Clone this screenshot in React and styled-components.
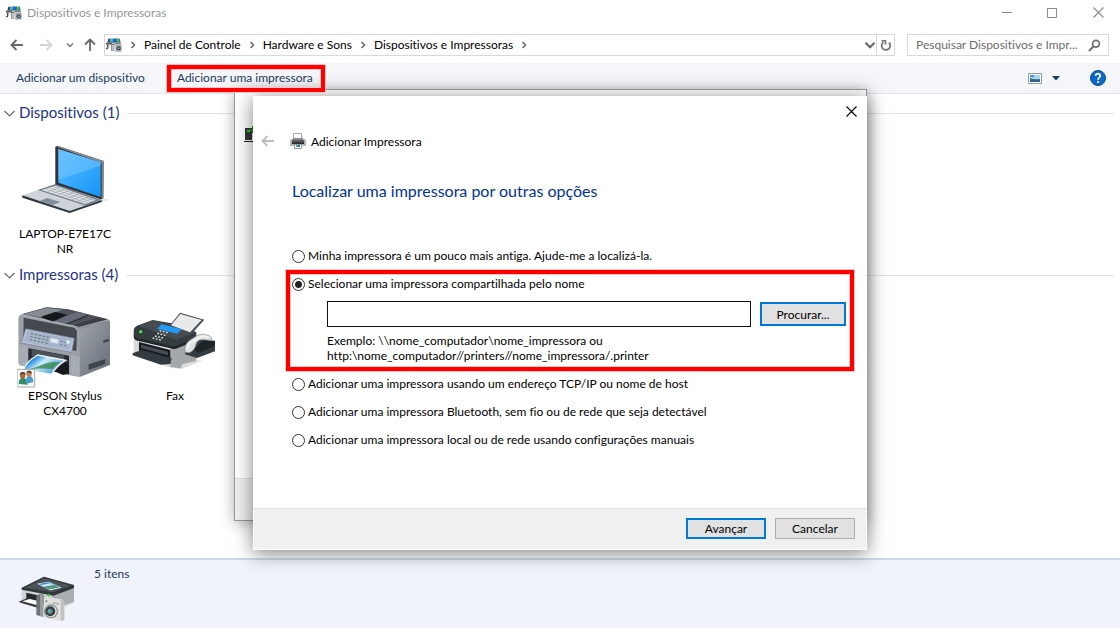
import React from "react";
import styled, { createGlobalStyle, css } from "styled-components";

const GlobalStyle = createGlobalStyle`
  *, *::before, *::after { box-sizing: border-box; }
  body { margin: 0; background: #fff; }
  body, button, input {
    font-family: Lato, "Open Sans", sans-serif;
    font-size: 12px;
    font-variant-ligatures: none;
    line-height: 15px;
    color: #000;
  }
  button { cursor: default; }
`;

const Explorer = styled.div`
  position: relative;
  display: flex;
  flex-direction: column;
  min-height: 100vh;
  overflow: hidden;
`;

const PlainButton = styled.button`
  display: flex;
  align-items: center;
  justify-content: center;
  flex: none;
  width: ${(p) => p.$w}px;
  height: ${(p) => p.$h || 20}px;
  padding: 0;
  border: 0;
  background: none;
`;

/* Title bar */
const TitleBar = styled.header`
  display: flex;
  align-items: center;
  height: 25px;
  padding-left: 6px;
`;

const WindowTitle = styled.h1`
  flex: 1;
  margin: 0 0 0 5px;
  font-size: 12px;
  font-weight: 400;
  color: #969696;
`;

/* Address row */
const NavRow = styled.nav`
  display: flex;
  align-items: center;
  height: 38px;
  padding: 2px 11px 0 6px;
`;

const AddressBar = styled.div`
  display: flex;
  align-items: center;
  flex: 1;
  height: 22px;
  margin-right: 12px;
  border: 1px solid #d9d9d9;
`;

const Crumbs = styled.ol`
  display: flex;
  align-items: center;
  flex: 1;
  margin: 0;
  padding: 0 0 0 1px;
  list-style: none;
  white-space: nowrap;
`;

const Crumb = styled.li`
  display: flex;
  align-items: center;
`;

const CrumbLink = styled.a`
  padding-bottom: 2px;
  color: #000;
  text-decoration: none;
`;

const RefreshCell = styled.div`
  border-left: 1px solid #d9d9d9;
`;

const SearchBox = styled.label`
  display: flex;
  align-items: center;
  width: 202px;
  height: 22px;
  padding: 0 7px 0 8px;
  border: 1px solid #d9d9d9;
`;

const SearchInput = styled.input`
  flex: 1;
  min-width: 0;
  padding: 0 0 2px;
  border: 0;
  outline: 0;
  background: none;
  &::placeholder { color: #6d6d6d; opacity: 1; }
`;

/* Command bar */
const CommandBar = styled.div`
  display: flex;
  align-items: center;
  height: 31px;
  padding-left: 16px;
  border-bottom: 1px solid #e3e5e9;
  background: #f4f6f9;
`;

const Command = styled.button`
  position: relative;
  height: 30px;
  margin-right: 32px;
  padding: 0 0 2px;
  border: 0;
  background: none;
  color: #1e395b;
  white-space: nowrap;
`;

const ViewControls = styled.div`
  display: flex;
  margin: 0 9px 0 auto;
`;

const Highlight = styled.span`
  position: absolute;
  z-index: 5;
  inset: ${(p) => p.$inset};
  border: 4px solid #fe0000;
  box-shadow: 0 0 0 1px #ffc4c4, inset 0 0 0 1px #ffc4c4;
  pointer-events: none;
`;

/* Device groups */
const Content = styled.main`
  flex: 1;
  padding: 9px 6px 0 0;
`;

const Group = styled.section`
  margin-bottom: 9px;
`;

const GroupHeader = styled.h2`
  display: flex;
  align-items: center;
  height: 20px;
  margin: 0 0 19px;
  padding-left: 4px;
  font-size: 15px;
  line-height: 18px;
  font-weight: 400;
  color: #1e3287;
  white-space: nowrap;
  &::after {
    content: "";
    flex: 1;
    height: 1px;
    margin-left: 8px;
    background: #e2e2e2;
  }
`;

const GroupName = styled.span`
  margin-left: 4px;
  padding-bottom: 2px;
`;

const Tiles = styled.div`
  display: flex;
  padding-left: 10px;
`;

const Tile = styled.figure`
  display: flex;
  flex-direction: column;
  align-items: center;
  width: 110px;
  margin: 0;
  text-align: center;
`;

const TileLabel = styled.figcaption`
  white-space: pre-line;
`;

/* Details pane */
const DetailsPane = styled.footer`
  display: flex;
  height: 70px;
  padding: 6px 17px;
  border-top: 2px solid #cfd9ea;
  background: #f0f3fa;
  color: #1e395b;
`;

const DetailsPicture = styled.div`
  padding-top: 8px;
`;

const DetailsText = styled.span`
  margin-left: 15px;
`;

/* Dialogs */
const windowBase = css`
  position: absolute;
  display: flex;
  flex-direction: column;
  background: #fff;
`;

const BackWindow = styled.div`
  ${windowBase}
  left: 234px;
  top: 89px;
  width: 633px;
  height: 432px;
  border: 1px solid #999;
  box-shadow: 0 2px 14px rgba(0, 0, 0, 0.3);
`;

const BackBody = styled.div`
  flex: 1;
  padding: 36px 9px;
`;

const BackFooter = styled.div`
  height: 42px;
  border-top: 1px solid #dfdfdf;
  background: #f0f0f0;
`;

const Dialog = styled.form`
  ${windowBase}
  left: 253px;
  top: 96px;
  width: 614px;
  z-index: 2;
  box-shadow: 0 3px 18px rgba(0, 0, 0, 0.5);
`;

const DialogTop = styled.div`
  display: flex;
  justify-content: flex-end;
  padding: 5px 5px 0 0;
`;

const DialogHeading = styled.div`
  display: flex;
  align-items: center;
  height: 20px;
  margin-top: 9px;
  padding-left: 5px;
`;

const PrinterSlot = styled.span`
  display: flex;
  margin: 0 5px 0 12px;
`;

const DialogBody = styled.div`
  padding: 29px 13px 54px 39px;
`;

const DialogTitle = styled.h2`
  margin: 0 0 40px;
  font-size: 16px;
  line-height: 22px;
  font-weight: 400;
  color: #003399;
`;

const Option = styled.label`
  display: flex;
  align-items: center;
  height: 28px;
  padding-bottom: 2px;
  white-space: nowrap;
`;

const Radio = styled.input`
  appearance: none;
  flex: none;
  width: 13px;
  height: 13px;
  margin: 2px 3px 0 0;
  border: 1px solid #333;
  border-radius: 50%;
  background: #fff;
  &:checked { background: radial-gradient(circle, #222 0 3px, #fff 4px); }
`;

const SharedOption = styled.div`
  position: relative;
  height: 100px;
`;

const SharedFields = styled.div`
  display: flex;
  align-items: center;
  gap: 9px;
  padding: 3px 8px 0 35px;
`;

const NameInput = styled.input`
  flex: 1;
  min-width: 0;
  height: 26px;
  padding: 0 4px;
  border: 1px solid #111;
  background: #fff;
`;

const Hint = styled.p`
  margin: 6px 0 0 35px;
`;

const PushButton = styled.button`
  width: ${(p) => p.$w}px;
  height: ${(p) => p.$h}px;
  padding: 0;
  border: ${(p) => (p.$primary ? "2px solid #0078d7" : "1px solid #adadad")};
  background: #e1e1e1;
`;

const DialogFooter = styled.div`
  display: flex;
  justify-content: flex-end;
  gap: 9px;
  height: 42px;
  padding: 9px 11px;
  border: 1px solid #fff;
  border-top-color: #dfdfdf;
  background: #f0f0f0;
`;

const line = { fill: "none", strokeLinecap: "butt" };

const Arrow = ({ color, dir = "left" }) => (
  <svg width="14" height="14" viewBox="0 0 14 14" aria-hidden="true">
    <g {...line} stroke={color} strokeWidth="1.8"
      transform={dir === "right" ? "rotate(180 7 7)" : dir === "up" ? "rotate(90 7 7)" : undefined}>
      <path d="M1.5 7H13M6.5 2L1.5 7l5 5" />
    </g>
  </svg>
);

const Chevron = ({ size = 8, color = "#666", dir = "down", weight = 1.5 }) => (
  <svg width={size} height={size} viewBox="0 0 8 8" aria-hidden="true">
    <path {...line} stroke={color} strokeWidth={weight} d={dir === "down" ? "M1 2.5l3 3 3-3" : "M2.5 1l3 3-3 3"} />
  </svg>
);

const GroupArrow = () => (
  <svg width="11" height="7" viewBox="0 0 11 7" aria-hidden="true">
    <path {...line} stroke="#666" strokeWidth="1.1" d="M.5 1l5 5 5-5" />
  </svg>
);

const Cross = ({ color }) => (
  <svg width="11" height="11" viewBox="0 0 11 11" aria-hidden="true">
    <path {...line} stroke={color} strokeWidth="1.1" d="M.5.5l10 10M10.5.5l-10 10" />
  </svg>
);

const DevicesIcon = () => (
  <svg width="16" height="16" viewBox="18 13 48 48" aria-hidden="true">
    <path d="M25 18h34l3 12H22z" fill="#3b4248" />
    <path d="M31 18h9v9H29z" fill="#35c3dd" />
    <path d="M39 18h11v9H38z" fill="#1266d8" />
    <path d="M50 18h7l2 9h-9z" fill="#45c766" />
    <path d="M20 30h44v6H20z" fill="#c9cccf" />
    <path d="M18 30h18v6H18z" fill="#555c60" />
    <path d="M21 36h15v12H21z" fill="#eceded" />
    <path d="M21 36h4v9h-4z" fill="#3f464b" />
    <path d="M18 45h6v5h-6z" fill="#555" />
    <path d="M34 34h9v21h-9z" fill="#686e72" />
    <path d="M37 37h4v17h-4z" fill="#e8e9ea" />
    <path d="M46 37h19v20H46z" fill="#a4a8ab" />
    <path d="M44 31h18v4H44z" fill="#7d858a" />
    <circle cx="56" cy="47" r="6" fill="#3c4247" />
    <circle cx="56" cy="47" r="2.5" fill="#9cc" />
  </svg>
);

const LaptopIcon = () => (
  <svg width="96" height="84" viewBox="50 36 288 252" aria-hidden="true">
    <defs>
      <linearGradient id="screen" x1="0" y1="0" x2="1" y2="1">
        <stop offset="0" stopColor="#5cbcff" />
        <stop offset="1" stopColor="#1496f8" />
      </linearGradient>
    </defs>
    <path d="M300 205l28 4-30 9z" fill="#e6e6e6" />
    <path d="M66 196v7l142 46 96-33v-6z" fill="#30383f" />
    <path d="M66 196l100-34 138 48-96 33z" fill="#cfd4db" />
    <path d="M112 180l54-18 138 48-48 17z" fill="#77838f" />
    <path d="M124 180l42-13 122 43-34 12z" fill="#e6e9ec" />
    <g stroke="#7b8690" strokeWidth="1.4">
      <path d="M134 176l131 44M145 173l131 43M156 169l130 44" />
      <path d="M140 186l38-13M154 191l38-13M168 196l38-13M182 201l38-13M196 206l38-13M210 211l38-13M224 216l38-13M238 219l38-13" />
    </g>
    <path d="M118 213l22-9 40 12-23 9z" fill="#7f8c9a" />
    <path d="M165 50l6-3 139 46-1 112-8 3-136-45z" fill="#2d3338" />
    <path d="M171 47l139 46-1 112-5 2V98L168 50z" fill="#858b90" />
    <path d="M174 57l127 40v104l-127-43z" fill="url(#screen)" />
    <path d="M174 57l127 40v10l-127 42z" fill="#7fcaff" opacity=".45" />
  </svg>
);

const EpsonIcon = () => (
  <svg width="96" height="84" viewBox="50 117 288 252" aria-hidden="true">
    <defs>
      <linearGradient id="side" x1="0" y1="0" x2="1" y2="1">
        <stop offset="0" stopColor="#a2a7af" />
        <stop offset="1" stopColor="#666c76" />
      </linearGradient>
      <linearGradient id="photo" x1="0" y1="0" x2="1" y2=".6">
        <stop offset="0" stopColor="#1677c8" />
        <stop offset=".3" stopColor="#3a9be0" />
        <stop offset=".5" stopColor="#c8eefa" />
        <stop offset="1" stopColor="#3f93cf" />
      </linearGradient>
    </defs>
    <path d="M55 158q2-8 12-10l72-21 64 6 120 30q6 3 6 9v128l-88 35-16-1-170-38z" fill="#868c95" />
    <path d="M228 195l100-26v130l-88 34z" fill="url(#side)" />
    <path d="M55 158q2-9 12-10l165 38q8 3 7 10l-1 138-26-4-157-33z" fill="#9ba0a8" />
    <path d="M66 147l73-20 64 6 120 30-86 24q-10-8-38-10z" fill="#50545a" />
    <path d="M70 148l69-19 48 5-66 23z" fill="#888d94" />
    <path d="M122 155l42-14 37 8-44 22z" fill="#15181b" />
    <path d="M160 169l68-27 34 7-67 28z" fill="#666d78" />
    <path d="M195 177l67-28v5l-58 24z" fill="#303338" />
    <path d="M178 172l40 9 75-24 28 7-87 24q-10-7-22-7z" fill="#3c4045" />
    <path d="M70 158l152 30 8 10-2 60-24-5-135-32z" fill="#44494f" />
    <path d="M76 191l146 29-8 42-151-28z" fill="#b7c3d8" stroke="#747f8e" strokeWidth="2" />
    <path d="M82 196l132 26-6 34-138-26z" fill="#a6b3ca" />
    <g fill="none" stroke="#5c7a72" strokeWidth="3" strokeDasharray="7 5">
      <path d="M92 206l54 11M90 215l54 11M88 224l54 11M181 229l17 4M180 239l17 4" />
    </g>
    <path d="M151 219l24 5-2 12-24-5z" fill="#e1e8f4" />
    <circle cx="203" cy="231" r="6" fill="#d7eff1" />
    <path d="M84 250l122 22v56l-122-23z" fill="#272b31" />
    <path d="M94 253l98 18v20l-98-18z" fill="#4b5159" />
    <path d="M160 318l34-25 12 4v29l-18 4z" fill="#18191c" />
    <path d="M212 270l26 5v59l-26-5zM57 238l25 5v64l-25-6z" fill="#a6abb4" />
    <path d="M70 314q8-25 42-44l84 16q-28 16-42 42z" fill="url(#photo)" stroke="#f5f7fa" strokeWidth="4" />
    <path d="M84 313q28-8 42-14t34-9l20 2q-14 8-24 20-36-3-72 1z" fill="#38864a" opacity=".8" />
    <path d="M309 226l17-5v8l-17 5zM265 298l50-16v15l-50 18z" fill="#41464d" />
    <path d="M60 149l178 38 87-23" fill="none" stroke="#c2c5ca" strokeWidth="2" />
    <path d="M50 313h53v53H50z" fill="#f8f8f8" stroke="#aaa" strokeWidth="3" />
    <path d="M55 357q0-18 12-19 14 1 15 21z" fill="#348b65" />
    <path d="M76 356q0-24 11-24 12 2 12 20z" fill="#4b9ccc" />
    <circle cx="67" cy="332" r="8" fill="#a96738" />
    <circle cx="86" cy="327" r="8" fill="#c18656" />
    <path d="M58 331q1-12 11-10 7 1 6 9-7-5-9-4zM78 325q1-10 10-8 7 1 6 9-7-4-10-4z" fill="#443b31" />
  </svg>
);

const FaxIcon = () => (
  <svg width="96" height="84" viewBox="380 117 288 252" aria-hidden="true">
    <path d="M400 220l112 30 75-22v66l-49 17-26-3-112-38z" fill="#d8dadd" />
    <path d="M510 250l78-24v66l-50 18-28-5z" fill="#a4a8ab" />
    <path d="M400 199q0-13 14-18l43-16 87 15 44 22v22l-54 23q-12 5-24 1l-98-22q-12-3-12-13z" fill="#353c40" />
    <path d="M402 208q0 9 10 12l100 23q10 2 20-2l54-22v8l-53 22q-11 5-23 1l-98-23q-12-3-11-12z" fill="#20272b" />
    <path d="M413 182l46-15 82 15 45 20-58 22z" fill="#454d52" />
    <path d="M507 183l32-40 73 21-38 42z" fill="#494f53" />
    <path d="M512 181l28-34 64 18-35 37z" fill="#e8e9ea" />
    <path d="M484 178l60 15-13 13-61-15z" fill="#229bf5" />
    <g fill="none" stroke="#eff4f6" strokeWidth="4" strokeDasharray="5 5">
      <path d="M478 197l28 7M471 205l28 7M464 213l28 7M457 219l28 7" />
    </g>
    <circle cx="421" cy="200" r="5" fill="#49e249" />
    <path d="M416 231l94 24v37l-94-26z" fill="#171c20" />
    <path d="M397 265l26-10 91 25-4 17-28 2-85-28z" fill="#343b40" />
    <path d="M422 239l81 21v11l-81-22z" fill="#454e54" />
    <path d="M554 251l36-28 54 4v32l-54 20-36-11z" fill="#353d42" />
    <path d="M580 255l27-28 37 2v13l-46 21z" fill="#1d2428" />
    <path d="M554 262q-4-26 17-38l22-14q14-6 34 2 9 5 8 14l-20-2q-18-4-27 10-4 22-20 29z" fill="#dfe1e2" stroke="#888e92" strokeWidth="2" />
    <path d="M562 254q0-18 14-25l24-14q12-3 24 2" fill="none" stroke="#f6f6f6" strokeWidth="5" />
    <path d="M545 298l64-15-22 12-45 18z" fill="#ddd" />
  </svg>
);

const PrinterCameraIcon = () => (
  <svg width="62" height="49" viewBox="50 104 186 147" aria-hidden="true">
    <path d="M64 147l66-35 91 28v50l-66 25-91-22z" fill="#d2d5d7" />
    <path d="M155 160l66-20v47l-66 25z" fill="#a9aeb1" />
    <path d="M64 145l67-33 90 25v9l-62 23-95-18z" fill="#31383c" />
    <path d="M73 145l59-28 81 22-57 20z" fill="#4c5458" />
    <path d="M110 133l35-6 39 18-34 8z" fill="#eaf5fb" />
    <path d="M115 134l29-5 33 15-29 6z" fill="#3586ca" />
    <path d="M128 143l32-5 17 6-29 6z" fill="#4c9a78" />
    <path d="M120 137l30-5 10 5-30 5z" fill="#c9e6fb" />
    <path d="M78 160l58 13v26l-58-14z" fill="#252a2e" />
    <path d="M54 188l28-13 35 10v22z" fill="#343a3e" />
    <path d="M66 186l22-7 29 7v13z" fill="#fff" />
    <path d="M108 169q9-7 21-4v67l-21-5z" fill="#6d7274" />
    <path d="M119 164l10 3v66l-10-3z" fill="#999c9d" />
    <path d="M130 172l50 7q12 2 12 12v51q-3 4-12 3l-51-11z" fill="#dfe0e0" />
    <path d="M181 180q11 2 11 12v49l-11 5z" fill="#bfc1c2" />
    <path d="M157 189l19 2v5l-19-3z" fill="#b4aea0" />
    <circle cx="152" cy="216" r="21" fill="#8f9495" />
    <circle cx="152" cy="216" r="17" fill="#eee" />
    <circle cx="150" cy="216" r="15" fill="#343d42" />
    <circle cx="149" cy="216" r="8" fill="#6f8081" />
    <circle cx="147" cy="215" r="4" fill="#39c6c0" />
    <circle cx="138" cy="186" r="3" fill="#685" />
    <circle cx="145" cy="168" r="4" fill="#45d546" />
  </svg>
);

const SmallPrinterIcon = () => (
  <svg width="16" height="16" viewBox="0 0 16 16" aria-hidden="true">
    <path d="M3.5.5h8v6h-8z" fill="#fff" stroke="#a5a5a5" />
    <path d="M1 6h14l1 2v5H0V8z" fill="#b4b4b4" />
    <path d="M3 5h10v3H3z" fill="#8a8a8a" />
    <path d="M2 7h12v3H2z" fill="#5a5d60" />
    <path d="M2 9h12v2H2z" fill="#2e3135" />
    <path d="M4.5 11.5h7v4h-7z" fill="#fff" stroke="#999" />
    <path d="M6 12h2v2H6z" fill="#49a6e8" />
    <path d="M8 12h2v2H8z" fill="#287b68" />
    <path d="M1 11h1v1H1zM14 11h1v1h-1z" fill="#6bd66b" />
  </svg>
);

const ServerIcon = () => (
  <svg width="16" height="18" viewBox="0 0 16 18" aria-hidden="true">
    <path d="M1 2h7v12H1z" fill="#393939" />
    <path d="M3 4h3v2H3z" fill="#28d52b" />
    <path d="M0 15h9v1H0z" fill="#222" />
    <path d="M6 3h5v2H6zM8 0h3v7H8z" fill="#159b18" />
  </svg>
);

const RefreshIcon = () => (
  <svg width="12" height="12" viewBox="0 0 12 12" aria-hidden="true">
    <path {...line} stroke="#777" strokeWidth="1.8" d="M3.5 3A4.3 4.3 0 1 0 9 3.5" />
    <path {...line} stroke="#777" strokeWidth="1.6" d="M1.5 1.8h4v4" />
  </svg>
);

const SearchIcon = () => (
  <svg width="13" height="13" viewBox="0 0 13 13" aria-hidden="true">
    <circle {...line} cx="8" cy="4.8" r="3.4" stroke="#707070" strokeWidth="1.7" />
    <path {...line} stroke="#707070" strokeWidth="2" d="M5.6 7.3L1 12" />
  </svg>
);

const ViewIcon = () => (
  <svg width="14" height="11" viewBox="0 0 14 11" aria-hidden="true">
    <path d="M.5.5h13v10H.5z" fill="#fff" stroke="#939aa3" />
    <path d="M2 2h10v7H2z" fill="#a9d3f7" />
    <path d="M2 2h4v2H2z" fill="#4b8fd6" />
    <path d="M2 5q5 2 10 1v3H2z" fill="#347365" />
    <path d="M2 7q5 1 10 0v2H2z" fill="#2b5f96" />
  </svg>
);

const HelpIcon = () => (
  <svg width="16" height="16" viewBox="0 0 16 16" aria-hidden="true">
    <circle cx="8" cy="8" r="7.5" fill="#0968c8" stroke="#084c92" />
    <path {...line} stroke="#fff" strokeWidth="1.8" d="M5.7 5.8C5.7 3 10.3 3 10.3 5.7c0 1.7-2.2 1.7-2.2 4" />
    <path d="M7.2 11h1.9v2H7.2z" fill="#fff" />
  </svg>
);

const crumbs = ["Painel de Controle", "Hardware e Sons", "Dispositivos e Impressoras"];

const laterOptions = [
  ["tcp", "Adicionar uma impressora usando um endereço TCP/IP ou nome de host"],
  ["bluetooth", "Adicionar uma impressora Bluetooth, sem fio ou de rede que seja detectável"],
  ["local", "Adicionar uma impressora local ou de rede usando configurações manuais"],
];

function DeviceGroup({ name, children }) {
  return (
    <Group>
      <GroupHeader>
        <GroupArrow />
        <GroupName>{name}</GroupName>
      </GroupHeader>
      <Tiles>{children}</Tiles>
    </Group>
  );
}

function Device({ icon, label }) {
  return (
    <Tile>
      {icon}
      <TileLabel>{label}</TileLabel>
    </Tile>
  );
}

function AddPrinterDialog() {
  return (
    <Dialog role="dialog" aria-label="Adicionar Impressora" onSubmit={(e) => e.preventDefault()}>
      <DialogTop>
        <PlainButton type="button" $w={21} $h={21} aria-label="Fechar"><Cross color="#000" /></PlainButton>
      </DialogTop>
      <DialogHeading>
        <PlainButton type="button" $w={20} aria-label="Voltar"><Arrow color="#bdbdbd" /></PlainButton>
        <PrinterSlot><SmallPrinterIcon /></PrinterSlot>
        <span>Adicionar Impressora</span>
      </DialogHeading>
      <DialogBody>
        <DialogTitle>Localizar uma impressora por outras opções</DialogTitle>
        <Option>
          <Radio type="radio" name="method" value="older" />
          Minha impressora é um pouco mais antiga. Ajude-me a localizá-la.
        </Option>
        <SharedOption>
          <Highlight $inset="0 0 -1px -6px" />
          <Option>
            <Radio type="radio" name="method" value="shared" defaultChecked />
            Selecionar uma impressora compartilhada pelo nome
          </Option>
          <SharedFields>
            <NameInput type="text" aria-label="Nome da impressora compartilhada" />
            <PushButton type="button" $w={86} $h={24} $primary>Procurar...</PushButton>
          </SharedFields>
          <Hint>
            Exemplo: \\nome_computador\nome_impressora ou<br />
            http:\nome_computador//printers//nome_impressora/.printer
          </Hint>
        </SharedOption>
        {laterOptions.map(([value, text]) => (
          <Option key={value}>
            <Radio type="radio" name="method" value={value} />
            {text}
          </Option>
        ))}
      </DialogBody>
      <DialogFooter>
        <PushButton type="submit" $w={80} $h={21} $primary>Avançar</PushButton>
        <PushButton type="button" $w={80} $h={21}>Cancelar</PushButton>
      </DialogFooter>
    </Dialog>
  );
}

export default function App() {
  return (
    <Explorer>
      <GlobalStyle />
      <TitleBar>
        <DevicesIcon />
        <WindowTitle>Dispositivos e Impressoras</WindowTitle>
        <PlainButton $w={42} aria-label="Minimizar">
          <svg width="10" height="1"><path d="M0 0h10v1H0z" fill="#8a8a8a" /></svg>
        </PlainButton>
        <PlainButton $w={48} aria-label="Maximizar">
          <svg width="10" height="10"><path d="M.5.5h9v9h-9z" fill="none" stroke="#8a8a8a" /></svg>
        </PlainButton>
        <PlainButton $w={44} aria-label="Fechar"><Cross color="#8a8a8a" /></PlainButton>
      </TitleBar>

      <NavRow>
        <PlainButton $w={22} aria-label="Voltar"><Arrow color="#666" /></PlainButton>
        <PlainButton $w={36} aria-label="Avançar"><Arrow color="#d4d4d4" dir="right" /></PlainButton>
        <PlainButton $w={12} aria-label="Locais recentes"><Chevron color="#777" /></PlainButton>
        <PlainButton $w={28} aria-label="Acima"><Arrow color="#666" dir="up" /></PlainButton>
        <AddressBar>
          <Crumbs>
            <Crumb><DevicesIcon /></Crumb>
            {crumbs.map((name) => (
              <Crumb key={name}>
                <PlainButton $w={22} aria-label={"Expandir " + name}><Chevron dir="right" /></PlainButton>
                <CrumbLink href="#">{name}</CrumbLink>
              </Crumb>
            ))}
            <Crumb><PlainButton $w={22} aria-label="Expandir"><Chevron dir="right" /></PlainButton></Crumb>
          </Crumbs>
          <PlainButton $w={13} aria-label="Locais anteriores"><Chevron size={12} weight={1.4} /></PlainButton>
          <RefreshCell>
            <PlainButton $w={17} aria-label="Atualizar"><RefreshIcon /></PlainButton>
          </RefreshCell>
        </AddressBar>
        <SearchBox>
          <SearchInput type="text" aria-label="Pesquisar" placeholder="Pesquisar Dispositivos e Impr..." />
          <SearchIcon />
        </SearchBox>
      </NavRow>

      <CommandBar>
        <Command>Adicionar um dispositivo</Command>
        <Command>
          Adicionar uma impressora
          <Highlight $inset="2px -12px 1px -10px" />
        </Command>
        <ViewControls>
          <PlainButton $w={20} aria-label="Modo de exibição"><ViewIcon /></PlainButton>
          <PlainButton $w={22} aria-label="Mais opções">
            <svg width="8" height="5"><path d="M0 0h8L4 4.5z" fill="#1e395b" /></svg>
          </PlainButton>
        </ViewControls>
        <PlainButton $w={44} aria-label="Ajuda"><HelpIcon /></PlainButton>
      </CommandBar>

      <Content>
        <DeviceGroup name="Dispositivos (1)">
          <Device icon={<LaptopIcon />} label={"LAPTOP-E7E17C\nNR"} />
        </DeviceGroup>
        <DeviceGroup name="Impressoras (4)">
          <Device icon={<EpsonIcon />} label={"EPSON Stylus\nCX4700"} />
          <Device icon={<FaxIcon />} label="Fax" />
        </DeviceGroup>
      </Content>

      <DetailsPane>
        <DetailsPicture><PrinterCameraIcon /></DetailsPicture>
        <DetailsText>5 itens</DetailsText>
      </DetailsPane>

      <BackWindow>
        <BackBody><ServerIcon /></BackBody>
        <BackFooter />
      </BackWindow>
      <AddPrinterDialog />
    </Explorer>
  );
}
